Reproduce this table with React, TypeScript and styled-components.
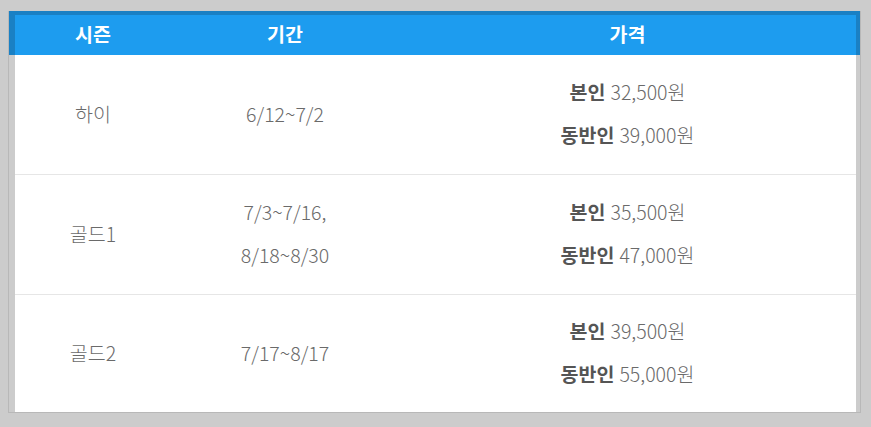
import styled, { createGlobalStyle } from 'styled-components';

const GlobalStyle = createGlobalStyle`
  html, body {
    margin: 0;
    padding: 0;
    background: #cccccc;
  }
  body {
    font-family: 'Noto Sans CJK KR', 'Noto Sans', sans-serif;
  }
`;

const Frame = styled.div`
  margin: 11px 0 0 8px;
  width: 851px;
  border: 1px solid #b8b8b8;
  border-top: none;
  background: #cccccc;
`;

const cols = '156px 228px 1fr';

const Head = styled.div`
  display: grid;
  grid-template-columns: ${cols};
  height: 40px;
  background: #1d9cef;
  border: solid #1a80c4;
  border-width: 4px 4px 0 6px;
`;

const HeadCell = styled.div`
  display: flex;
  align-items: center;
  justify-content: center;
  padding-bottom: 4px;
  color: #ffffff;
  font-size: 19.5px;
  font-weight: 700;
`;

const Body = styled.div`
  margin: 0 4px 0 6px;
  background: #ffffff;
`;

const Row = styled.div<{ $last?: boolean }>`
  display: grid;
  grid-template-columns: ${cols};
  height: ${(p) => (p.$last ? '117px' : '119px')};
  border-bottom: ${(p) => (p.$last ? 'none' : '1px solid #e6e6e6')};
`;

const Cell = styled.div`
  display: flex;
  flex-direction: column;
  align-items: center;
  justify-content: center;
  padding-bottom: 3px;
  color: #6a6a6a;
  font-size: 19.5px;
  font-weight: 300;
  line-height: 43px;
`;

const Label = styled.b`
  color: #555555;
  font-weight: 700;
  margin-right: 5px;
`;

type Season = {
  name: string;
  period: string[];
  self: string;
  partner: string;
};

const seasons: Season[] = [
  { name: '하이', period: ['6/12~7/2'], self: '32,500원', partner: '39,000원' },
  { name: '골드1', period: ['7/3~7/16,', '8/18~8/30'], self: '35,500원', partner: '47,000원' },
  { name: '골드2', period: ['7/17~8/17'], self: '39,500원', partner: '55,000원' },
];

export default function App() {
  return (
    <>
      <GlobalStyle />
      <Frame>
        <Head>
          <HeadCell>시즌</HeadCell>
          <HeadCell>기간</HeadCell>
          <HeadCell>가격</HeadCell>
        </Head>
        <Body>
          {seasons.map((s, i) => (
            <Row key={s.name} $last={i === seasons.length - 1}>
              <Cell>{s.name}</Cell>
              <Cell>
                {s.period.map((p) => (
                  <span key={p}>{p}</span>
                ))}
              </Cell>
              <Cell>
                <span>
                  <Label>본인</Label>
                  {s.self}
                </span>
                <span>
                  <Label>동반인</Label>
                  {s.partner}
                </span>
              </Cell>
            </Row>
          ))}
        </Body>
      </Frame>
    </>
  );
}
